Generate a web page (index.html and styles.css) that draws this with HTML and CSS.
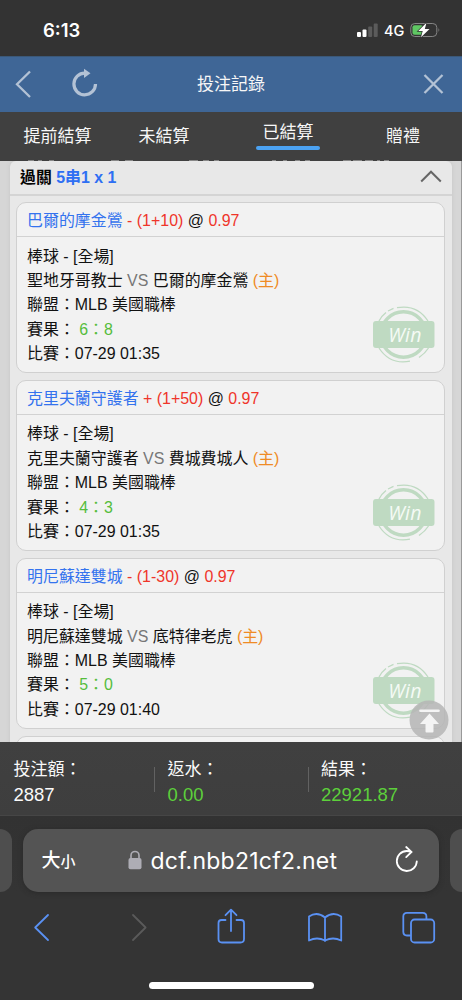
FILE: index.html
```html
<!DOCTYPE html>
<html lang="zh-Hant">
<head>
<meta charset="utf-8">
<meta name="viewport" content="width=device-width, initial-scale=1">
<title>投注記錄</title>
<link rel="stylesheet" href="styles.css">
</head>
<body>
<svg class="defs" width="0" height="0">
  <symbol id="win" viewBox="0 0 64 58">
    <g fill="none" stroke="#bfdac2">
      <circle cx="31.5" cy="28.5" r="22.7" stroke-width="3.4"/>
      <path stroke-width="1.3" d="M7 15Q9.500 10 14 6.500M16 5l5.500-2.700M25 1.700Q45-2 56 15M7 42Q18 59 38 55.200M47 51.500Q53 47.500 56.500 42"/>
    </g>
    <rect x="1" y="15" width="61.500" height="27" rx="3" fill="#bfdac2"/>
  </symbol>
</svg>
<div class="phone">
  <div class="status">
    <span class="time">6:13</span>
    <div class="signals">
      <svg width="21" height="15" viewBox="0 0 21 15"><rect x="0" y="9" width="4" height="5" rx="1" fill="#fff"/><rect x="5.500" y="6.500" width="4" height="7.500" rx="1" fill="#fff"/><rect x="11.200" y="3.500" width="4" height="10.500" rx="1" fill="#5b5b5b"/><rect x="16.700" y="0.500" width="4" height="13.500" rx="1" fill="#5b5b5b"/></svg>
      <span class="net">4G</span>
      <svg class="battery" width="31" height="16" viewBox="0 0 31 16"><rect x=".8" y="1.500" width="26" height="13" rx="4" fill="none" stroke="#858585"/><path d="M28.500 6q1.800 2 0 4z" fill="#858585"/><rect x="2.500" y="3.200" width="10.500" height="9.600" rx="2" fill="#5fc763"/><path d="M16.500.8 8.300 9h4.400l-1.700 6.300L19.500 7H14.800z" fill="#fff" stroke="#333" stroke-width="1.400" paint-order="stroke"/></svg>
    </div>
  </div>
  <header class="nav">
    <svg width="462" height="56" viewBox="0 0 462 56" fill="none" stroke="#b3c2d5"><path d="M30 14.500 17 27.300 30 40" stroke-width="2.300"/><path d="M95.500 27A10.800 10.800 0 1 1 85 16.200" stroke-width="3.200"/><path d="M84 11.700l6.500 4.500-6.500 4.800z" fill="#b3c2d5" stroke="none"/><path d="M424.500 18l18 18M442.500 18l-18 18" stroke-width="2.300"/></svg>
    <h1>投注記錄</h1>
  </header>
  <nav class="tabs">
    <span>提前結算</span><span>未結算</span><span class="active"><b>已結算</b></span><span>贈禮</span>
    <svg class="under" width="462" height="3" viewBox="0 0 462 3"><path d="M28 2.500h6m4 0h4m7 0h5m57 0h8m6 0h8m56 0h9m5 0h6m5 0h5m53 0h4m7 0h4m8 0h5m5 0h5m33 0h8m2 0h9m3 0h8m4 0h3m4 0h5" stroke="#888"/></svg>
  </nav>
  <main class="content">
    <section class="panel">
      <div class="group"><span>過關 <em>5串1 x 1</em></span><svg width="22" height="14" viewBox="0 0 22 14"><path d="M1.200 12.500 11 2.700 20.800 12.500" fill="none" stroke="#666" stroke-width="2"/></svg></div>
      <div class="cards">
        <article class="card">
          <h2>巴爾的摩金鶯 <i>- (1+10)</i> <u>@</u> <i>0.97</i></h2>
          <div class="detail"><p>棒球 - [全場]</p><p>聖地牙哥教士 <s>VS</s> 巴爾的摩金鶯 <em>(主)</em></p><p>聯盟：MLB 美國職棒</p><p>賽果： <b>6：8</b></p><p>比賽：07-29 01:35</p></div>
          <div class="win"><svg width="64" height="58"><use href="#win"/></svg><span>Win</span></div>
        </article>
        <article class="card">
          <h2>克里夫蘭守護者 <i>+ (1+50)</i> <u>@</u> <i>0.97</i></h2>
          <div class="detail"><p>棒球 - [全場]</p><p>克里夫蘭守護者 <s>VS</s> 費城費城人 <em>(主)</em></p><p>聯盟：MLB 美國職棒</p><p>賽果： <b>4：3</b></p><p>比賽：07-29 01:35</p></div>
          <div class="win"><svg width="64" height="58"><use href="#win"/></svg><span>Win</span></div>
        </article>
        <article class="card">
          <h2>明尼蘇達雙城 <i>- (1-30)</i> <u>@</u> <i>0.97</i></h2>
          <div class="detail"><p>棒球 - [全場]</p><p>明尼蘇達雙城 <s>VS</s> 底特律老虎 <em>(主)</em></p><p>聯盟：MLB 美國職棒</p><p>賽果： <b>5：0</b></p><p>比賽：07-29 01:40</p></div>
          <div class="win"><svg width="64" height="58"><use href="#win"/></svg><span>Win</span></div>
        </article>
        <article class="card"></article>
      </div>
    </section>
    <svg class="top" width="40" height="40" viewBox="0 0 40 40"><circle cx="20" cy="20" r="19.500" fill="#b5b5b5" fill-opacity=".85"/><path d="M11.500 10.800h18" stroke="#f4f4f4" stroke-width="2.600" stroke-linecap="round"/><path d="M20.500 13.500 30 24h-5.500v7.500q0 1-1 1h-6q-1 0-1-1V24H11z" fill="#f4f4f4"/></svg>
  </main>
  <section class="totals">
    <div><span>投注額：</span><strong>2887</strong></div>
    <div class="green"><span>返水：</span><strong>0.00</strong></div>
    <div class="green"><span>結果：</span><strong>22921.87</strong></div>
  </section>
  <footer class="browser">
    <div class="addresses">
      <div class="side left"></div>
      <div class="address">
        <span class="size">大<small>小</small></span>
        <svg class="lock" width="14" height="20" viewBox="0 0 14 20"><path d="M3 9V5.500a4 4 0 0 1 8 0V9" fill="none" stroke="#aeadb5" stroke-width="1.600"/><rect x=".5" y="8" width="13" height="11.300" rx="2" fill="#aeadb5"/></svg>
        <span class="url">dcf.nbb21cf2.net</span>
        <svg class="reload" width="24" height="28" viewBox="0 0 24 28" fill="none" stroke="#fff" stroke-width="1.800" stroke-linecap="round"><path d="M21.800 16.300A10 10 0 1 1 11.800 6q2 0 4.300.7M11.200 2l5.300 4.900-5.300 5.200"/></svg>
      </div>
      <div class="side right"></div>
    </div>
    <svg class="tools" width="462" height="60" viewBox="0 0 462 60" fill="none" stroke="#5a91f3" stroke-width="1.800" stroke-linecap="round" stroke-linejoin="round"><path d="M48 19 35.200 31.500 48 44"/><path d="M133 19l12.600 12.500L133 44" stroke="#5a5a5a"/><path d="M225.500 24h-4q-3 0-3 3v16q0 3.500 3.500 3.500h18.500q3.500 0 3.500-3.500V27q0-3-3-3H236.500M231 35V14M225.500 19.200 231 13.600l5.500 5.600"/><path d="M325 21.500Q317 15 309 20.500v24q8-4 16 0 8-4 16.200 0v-24Q333 15 325 21.500zV45"/><rect x="411" y="23.500" width="23.200" height="23" rx="3.500"/><path d="M410 39.500h-3q-3.700 0-3.700-3.700V20.500q0-3.700 3.700-3.700h15.700q3.700 0 3.700 3.700V23"/></svg>
    <div class="home"></div>
  </footer>
</div>
</body>
</html>
```
FILE: styles.css
```css
* { box-sizing: border-box; }
body { margin: 0; font-family: "Liberation Sans", "Noto Sans CJK TC", sans-serif; }
h1, h2, p { margin: 0; font-weight: 400; }
em, i { font-style: normal; }
u, s { text-decoration: none; }
svg { display: block; flex: none; }
.defs { position: absolute; }
.phone { width: 462px; height: 1000px; display: flex; flex-direction: column; overflow: hidden; background: #333; }
.status { height: 56px; flex: none; display: flex; justify-content: space-between; padding: 18px 21px 0 43px; color: #fff; font-family: Inter, sans-serif; }
.time { font-size: 18.5px; font-weight: 600; line-height: 24px; }
.signals { display: flex; height: 24px; align-items: center; }
.net { font-size: 14.500px; font-weight: 500; width: 26px; margin-left: 6px; }
.nav { height: 56px; flex: none; background: #3f6696; border-top: 1px solid #3b5878; position: relative; }
.nav h1 { position: absolute; inset: 0; text-align: center; color: #f7f7f7; font-size: 17px; line-height: 55px; }
.tabs { height: 48.500px; flex: none; background: #404040; color: #f7f7f7; font-size: 17px; line-height: 49px; position: relative; display: grid; grid-template-columns: 107px 106px 142px 88px; padding-left: 4px; text-align: center; }
.tabs b { display: block; width: 64px; margin: 0 auto; font-weight: 400; height: 38px; padding-top: 4px; line-height: 33px; position: relative; }
.tabs b::after { content: ""; position: absolute; left: 0; bottom: 0; width: 64px; height: 4px; border-radius: 2px; background: #4ba2f2; }
.under { position: absolute; left: 0; bottom: 0; }
.content { flex: none; height: 581.500px; position: relative; overflow: hidden; background: #d6d6d6; padding: 0 10px; border-right: 1px solid #999; }
.panel { width: 442px; background: #e8e8e8; border-radius: 6px 6px 0 0; box-shadow: 0 0 4px #c5c5c5; }
.group { height: 35px; border-bottom: 2px solid #d4d4d4; padding: 0 10px 2px; display: flex; align-items: center; justify-content: space-between; font-size: 15.900px; font-weight: 700; color: #050505; }
.group em { color: #2e6ff3; }
.cards { padding: 6.500px 7px 6px 6px; display: flex; flex-direction: column; gap: 6.500px; }
.card { height: 171.400px; flex: none; border: 1.500px solid #d0d0d0; border-radius: 10px; background: #f2f2f2; position: relative; font-size: 15.950px; color: #111; white-space: nowrap; }
.card h2 { font-size: inherit; height: 34px; line-height: 35px; border-bottom: 1px solid #d2d2d2; padding-left: 10px; color: #3473ee; }
.card i { color: #ef352a; }
.card u { color: #111; }
.detail { padding: 7.500px 10px; }
.detail p { height: 24.400px; line-height: 24.400px; }
.detail s { color: #777; }
.detail em { color: #ef8b25; }
.detail b { color: #55bd3c; font-weight: 400; }
.win { position: absolute; right: 8px; bottom: 8.500px; width: 64px; height: 58px; }
.win span { position: absolute; left: 1px; top: 15px; width: 64px; text-align: center; font-family: "Open Sans", "Noto Sans", sans-serif; font-size: 19.500px; font-weight: 500; font-style: oblique; line-height: 27px; letter-spacing: .300px; color: #f5faf5; }
.top { position: absolute; left: 409px; top: 539px; }
.totals { height: 73.500px; flex: none; display: grid; grid-template-columns: 154px 153.500px 154.500px; background: linear-gradient(#404040, #3e3e3e); border-bottom: 1px solid #464646; padding-top: 15px; }
.totals div { padding-left: 13.500px; position: relative; display: flex; flex-direction: column; color: #fafafa; }
.totals div + div::before { content: ""; position: absolute; left: 0; top: 10px; width: 1px; height: 25px; background: #626262; }
.totals span { font-size: 17px; line-height: 25px; }
.totals strong { font-size: 18.500px; font-weight: 400; line-height: 25px; }
.totals .green strong { color: #5dd03b; }
.browser { height: 185px; flex: none; background: #343434; display: flex; flex-direction: column; align-items: center; }
.addresses { width: 462px; height: 76px; display: flex; justify-content: space-between; padding-top: 13px; background: linear-gradient(#323232, #343434); }
.address { width: 416px; height: 63px; border-radius: 15px; background: #545454; color: #fff; display: flex; align-items: center; padding-left: 18.500px; box-shadow: 0 1px 5px #292929; }
.side { width: 12px; height: 63px; background: #4e4e4e; }
.left { border-radius: 0 12px 12px 0; }
.right { border-radius: 12px 0 0 12px; }
.size { width: 86px; font: 500 19px/24px "Noto Sans CJK TC", sans-serif; }
.size small { font-size: 15px; }
.url { font: 400 23px/30px Inter, sans-serif; letter-spacing: .230px; margin: 2px 0 0 9px; width: 244px; }
.reload { margin-top: -3px; }
.tools { margin-top: 4px; }
.home { width: 165px; height: 7px; border-radius: 4px; background: #fff; margin-top: 26px; }
```
